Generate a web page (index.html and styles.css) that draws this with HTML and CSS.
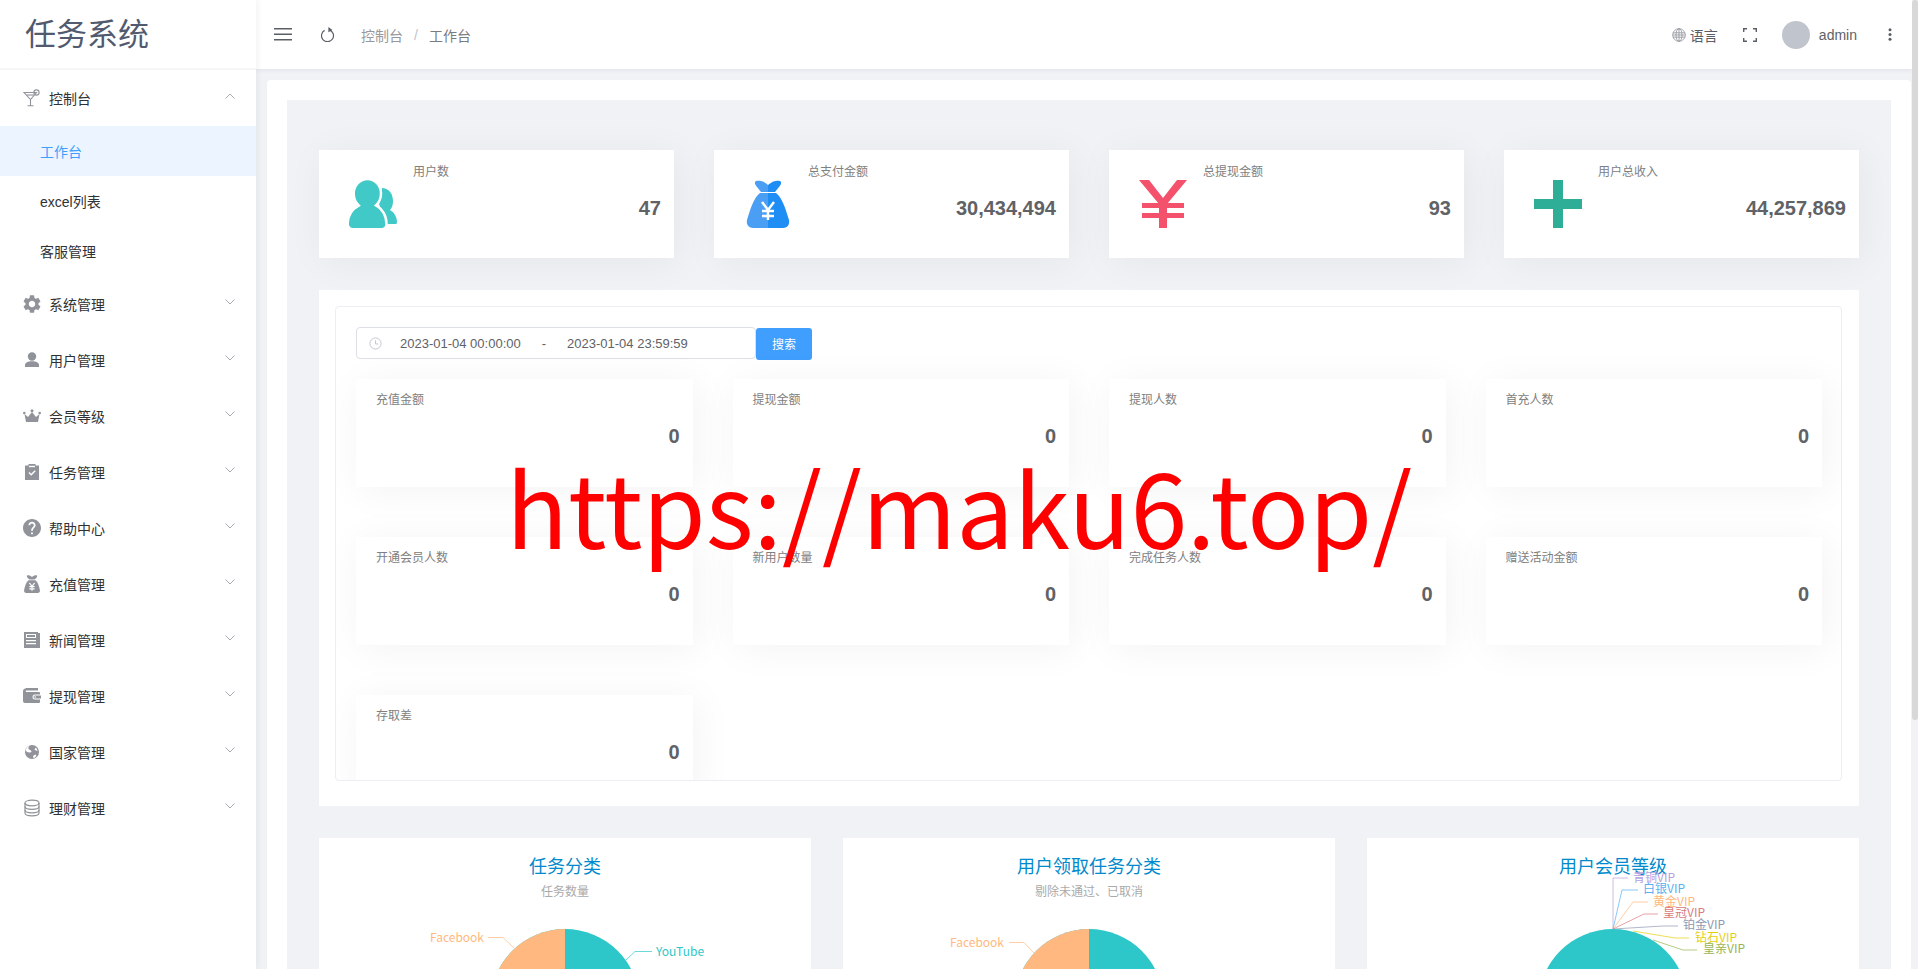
FILE: index.html
```html
<!DOCTYPE html>
<html lang="zh-CN">
<head>
  <meta charset="UTF-8" />
  <meta name="viewport" content="width=device-width, initial-scale=1.0" />
  <title>任务系统</title>
  <link rel="stylesheet" href="styles.css">
</head>
<body>
  <div class="app">
    <aside class="sidebar">
      <div class="logo">任务系统</div>
      <ul class="menu">
        <li class="menu-item">
          <svg class="menu-icon" viewBox="0 0 18 18" fill="none" stroke="currentColor" stroke-width="1.1"><path d="M1 3.5h12.5L7.5 10.5z"/><path d="M7.5 10.5v6M4.5 16.8h6"/><circle cx="13.5" cy="3.5" r="2.6"/><path d="M3.5 6h7.5"/></svg>
          <span>控制台</span>
          <svg class="arrow" viewBox="0 0 10 6"><path d="M.5 5.5 5 1l4.5 4.5"/></svg>
        </li>
        <li class="sub-item active">工作台</li>
        <li class="sub-item">excel列表</li>
        <li class="sub-item">客服管理</li>
        <li class="menu-item">
          <svg class="menu-icon" viewBox="2 2 20 20" fill="currentColor"><path d="M19.14 12.94c.04-.3.06-.61.06-.94 0-.32-.02-.64-.07-.94l2.03-1.58a.49.49 0 0 0 .12-.61l-1.92-3.32a.488.488 0 0 0-.59-.22l-2.39.96c-.5-.38-1.03-.7-1.62-.94l-.36-2.54a.484.484 0 0 0-.48-.41h-3.84c-.24 0-.43.17-.47.41l-.36 2.54c-.59.24-1.13.57-1.62.94l-2.39-.96c-.22-.08-.47 0-.59.22L2.74 8.87c-.12.21-.08.47.12.61l2.03 1.58c-.05.3-.09.63-.09.94s.02.64.07.94l-2.03 1.58a.49.49 0 0 0-.12.61l1.92 3.32c.12.22.37.29.59.22l2.39-.96c.5.38 1.03.7 1.62.94l.36 2.54c.05.24.24.41.48.41h3.84c.24 0 .44-.17.47-.41l.36-2.54c.59-.24 1.13-.56 1.62-.94l2.39.96c.22.08.47 0 .59-.22l1.92-3.32c.12-.22.07-.47-.12-.61l-2.01-1.58zM12 15.6c-1.98 0-3.6-1.62-3.6-3.6s1.62-3.6 3.6-3.6 3.6 1.62 3.6 3.6-1.62 3.6-3.6 3.6z"/></svg>
          <span>系统管理</span>
          <svg class="arrow" viewBox="0 0 10 6"><path d="M.5.5 5 5 9.500.5"/></svg>
        </li>
        <li class="menu-item">
          <svg class="menu-icon" viewBox="0 0 18 18" fill="currentColor"><circle cx="9" cy="5.500" r="4.200"/><path d="M2 16v-2c0-2.500 3-3.800 7-3.800s7 1.300 7 3.800v2z"/></svg>
          <span>用户管理</span>
          <svg class="arrow" viewBox="0 0 10 6"><path d="M.5.5 5 5 9.500.5"/></svg>
        </li>
        <li class="menu-item">
          <svg class="menu-icon" viewBox="0 0 18 18" fill="currentColor"><path d="M1.500 7 5 10l4-5 4 5 3.500-3-1.500 8H3z"/><circle cx="1.300" cy="6" r="1.300"/><circle cx="9" cy="3.800" r="1.500"/><circle cx="16.700" cy="6" r="1.300"/></svg>
          <span>会员等级</span>
          <svg class="arrow" viewBox="0 0 10 6"><path d="M.5.5 5 5 9.500.5"/></svg>
        </li>
        <li class="menu-item">
          <svg class="menu-icon" viewBox="0 0 18 18"><path fill="currentColor" d="M2 2.500h3.500V1h7v1.500H16V17H2z"/><path fill="#fff" d="M6 2.800h6v1.400H6z"/><path fill="none" stroke="#fff" stroke-width="1.400" d="M6 9.500l2.200 2.200 4-4"/></svg>
          <span>任务管理</span>
          <svg class="arrow" viewBox="0 0 10 6"><path d="M.5.5 5 5 9.500.5"/></svg>
        </li>
        <li class="menu-item">
          <svg class="menu-icon" viewBox="2 2 20 20" fill="currentColor"><path d="M12 2C6.480 2 2 6.480 2 12s4.480 10 10 10 10-4.480 10-10S17.520 2 12 2zm1 17h-2v-2h2v2zm2.070-7.750l-.9.920C13.450 12.900 13 13.500 13 15h-2v-.5c0-1.100.45-2.100 1.170-2.830l1.240-1.260c.37-.36.59-.86.59-1.410 0-1.100-.9-2-2-2s-2 .9-2 2H8c0-2.210 1.790-4 4-4s4 1.790 4 4c0 .88-.36 1.680-.93 2.250z"/></svg>
          <span>帮助中心</span>
          <svg class="arrow" viewBox="0 0 10 6"><path d="M.5.5 5 5 9.500.5"/></svg>
        </li>
        <li class="menu-item">
          <svg class="menu-icon" viewBox="0 0 48 48" fill="currentColor"><path d="M11 1c4-1 9 1 13 4 4-3 9-5 13-4 2 2 0 5-2 7l-4 4H17l-4-4c-2-2-4-5-2-7zM15 14h18c7 5 10 16 12 26 1 5-2 8-6 8H9c-4 0-7-3-6-8 2-10 5-21 12-26z"/><path fill="none" stroke="#fff" stroke-width="3" d="M17 21l7 9 7-9M24 30v12M17 31h14M17 37h14"/></svg>
          <span>充值管理</span>
          <svg class="arrow" viewBox="0 0 10 6"><path d="M.5.5 5 5 9.500.5"/></svg>
        </li>
        <li class="menu-item">
          <svg class="menu-icon" viewBox="0 0 18 18"><path fill="currentColor" d="M1 1h14v1h2v15H1z"/><path fill="#fff" d="M3 3h10v4H3zM3 9h10v1.300H3zM3 12h10v1.300H3z"/><path fill="currentColor" d="M4 4h8v2H4z"/></svg>
          <span>新闻管理</span>
          <svg class="arrow" viewBox="0 0 10 6"><path d="M.5.5 5 5 9.500.5"/></svg>
        </li>
        <li class="menu-item">
          <svg class="menu-icon" viewBox="0 0 18 18"><path fill="currentColor" d="M2.500 1H15v2.500H2.500zM0 4.500C0 2.500 1 1.500 2.500 1.500L3 5h13a1 1 0 0 1 1 1v1.500h-5a2.500 2.500 0 0 0 0 5h5V15a1 1 0 0 1-1 1H2a2 2 0 0 1-2-2z"/><path fill="currentColor" d="M12 8.500h6v3h-6a1.500 1.500 0 0 1 0-3z"/><circle cx="12.200" cy="10" r=".8" fill="#fff"/></svg>
          <span>提现管理</span>
          <svg class="arrow" viewBox="0 0 10 6"><path d="M.5.5 5 5 9.500.5"/></svg>
        </li>
        <li class="menu-item">
          <svg class="menu-icon" viewBox="0 0 18 18"><circle cx="9" cy="9" r="7" fill="currentColor"/><path fill="#fff" d="M8 2c-2 1-3 2.500-2.500 4 1 1 2.500 1 3 2.500-.5 1.500-3 1-4.500.5L2.500 7C3.500 4.500 5.500 2.500 8 2zM13 4.500l1.500 3c-1 .5-2.500 0-3-1.200zM10.500 12.500l2-1 1 1.500-2.500 2.300-1-1.300z"/></svg>
          <span>国家管理</span>
          <svg class="arrow" viewBox="0 0 10 6"><path d="M.5.5 5 5 9.500.5"/></svg>
        </li>
        <li class="menu-item">
          <svg class="menu-icon" viewBox="0 0 18 18" fill="none" stroke="currentColor" stroke-width="1.200"><ellipse cx="9" cy="4" rx="7" ry="2.800"/><path d="M2 4v10c0 1.600 3 2.800 7 2.800s7-1.200 7-2.800V4"/><path d="M2 7.500c0 1.600 3 2.800 7 2.800s7-1.200 7-2.800M2 11c0 1.600 3 2.800 7 2.800s7-1.200 7-2.800"/></svg>
          <span>理财管理</span>
          <svg class="arrow" viewBox="0 0 10 6"><path d="M.5.5 5 5 9.500.5"/></svg>
        </li>
      </ul>
    </aside>

    <div class="main">
      <header class="navbar">
        <svg class="hamburger" viewBox="0 0 18 13" fill="currentColor"><path d="M0 0h18v1.600H0zM0 5.500h18v1.600H0zM0 11h18v1.600H0z"/></svg>
        <svg class="refresh" viewBox="0 0 14 15"><path fill="none" stroke="currentColor" stroke-width="1.200" d="M3.600 3.400A6 6 0 1 0 8.200 2.900"/><path fill="currentColor" d="M7.400 0l4 2.900-4 2.400z"/></svg>
        <nav class="breadcrumb">
          <span class="crumb">控制台</span>
          <span class="crumb-sep">/</span>
          <span class="crumb-current">工作台</span>
        </nav>
        <div class="navbar-right">
          <div class="lang">
            <svg class="globe" viewBox="0 0 14 14" fill="none" stroke="currentColor" stroke-width=".8"><circle cx="7" cy="7" r="6.300"/><ellipse cx="7" cy="7" rx="3" ry="6.300"/><path d="M7 .7v12.600M1 4.800h12M1 9.200h12M.7 7h12.600"/></svg>
            <span>语言</span>
          </div>
          <svg class="fullscreen" viewBox="0 0 14 14" fill="none" stroke="currentColor" stroke-width="1.400"><path d="M.7 4V.7H4M10 .7h3.300V4M13.300 10v3.300H10M4 13.300H.7V10"/></svg>
          <div class="avatar"></div>
          <span class="username">admin</span>
          <svg class="more" viewBox="0 0 4 13" fill="currentColor"><circle cx="2" cy="1.700" r="1.500"/><circle cx="2" cy="6.500" r="1.500"/><circle cx="2" cy="11.300" r="1.500"/></svg>
        </div>
      </header>

      <div class="content">
        <div class="dashboard">
          <div class="dashboard-inner">
            <div class="panel-group">
              <div class="panel">
                <svg class="panel-icon" viewBox="0 0 48 48" fill="#40c9c6"><path d="M33 8c6 0 11 5 11 13 0 4-1 7-3 9 4 2 7 7 7 12 0 2-1 2-2 2h-8l-8-20 3-16z"/><path stroke="#fff" stroke-width="2.500" d="M18.500-1C26 -1 32 5.500 32 13.500c0 5-2 9-5 12 6 3 10.500 10 10.500 18.500 0 3-2 5.300-5 5.300H4c-3 0-5.300-2.300-5.300-5.300 0-8.500 4.800-15.500 11-18.500-3-3-5-7-5-12C4.700 5.500 11-1 18.500-1z"/></svg>
                <div class="panel-body">
                  <div class="panel-label">用户数</div>
                  <div class="panel-num">47</div>
                </div>
              </div>
              <div class="panel">
                <svg class="panel-icon" viewBox="0 0 48 48"><path fill="#4a9ff5" d="M24 5C20 1 15 0 12 1c-2 1-1 4 1 6l4 5h7zM24 13h-8C10 17 6 30 3 40c-1 5 2 8 6 8h15z"/><path fill="#1e8ef5" d="M24 5c4-4 9-5 12-4 2 1 1 4-1 6l-4 5h-7zM24 13h8c6 4 10 17 13 27 1 5-2 8-6 8H24z"/><path fill="none" stroke="#fff" stroke-width="2.500" d="M18 22l6 8 6-8M24 30v10M18 31h12M18 36h12"/></svg>
                <div class="panel-body">
                  <div class="panel-label">总支付金额</div>
                  <div class="panel-num">30,434,494</div>
                </div>
              </div>
              <div class="panel">
                <svg class="panel-icon" viewBox="0 0 48 48" fill="#f4516c"><path d="M0 0h10l14 18L38 0h10L28 24h-8z"/><path d="M3 23h42v5H3zM3 33h42v5H3zM20 22h8v26h-8z"/></svg>
                <div class="panel-body">
                  <div class="panel-label">总提现金额</div>
                  <div class="panel-num">93</div>
                </div>
              </div>
              <div class="panel">
                <svg class="panel-icon" viewBox="0 0 48 48" fill="#2fae97"><path d="M19 0h10v19h19v10H29v19H19V29H0V19h19z"/></svg>
                <div class="panel-body">
                  <div class="panel-label">用户总收入</div>
                  <div class="panel-num">44,257,869</div>
                </div>
              </div>
            </div>

            <div class="query-card">
              <div class="query-box">
                <div class="query-bar">
                  <div class="date-picker">
                    <svg class="clock" viewBox="0 0 14 14" fill="none" stroke="currentColor" stroke-width="1"><circle cx="7" cy="7" r="6"/><path d="M7 3.500V7.500h3"/></svg>
                    <span class="date-start">2023-01-04 00:00:00</span>
                    <span class="date-sep">-</span>
                    <span class="date-end">2023-01-04 23:59:59</span>
                  </div>
                  <button class="search-btn">搜索</button>
                </div>
                <div class="stat-grid">
                  <div class="stat"><div class="stat-label">充值金额</div><div class="stat-num">0</div></div>
                  <div class="stat"><div class="stat-label">提现金额</div><div class="stat-num">0</div></div>
                  <div class="stat"><div class="stat-label">提现人数</div><div class="stat-num">0</div></div>
                  <div class="stat"><div class="stat-label">首充人数</div><div class="stat-num">0</div></div>
                  <div class="stat"><div class="stat-label">开通会员人数</div><div class="stat-num">0</div></div>
                  <div class="stat"><div class="stat-label">新用户数量</div><div class="stat-num">0</div></div>
                  <div class="stat"><div class="stat-label">完成任务人数</div><div class="stat-num">0</div></div>
                  <div class="stat"><div class="stat-label">赠送活动金额</div><div class="stat-num">0</div></div>
                  <div class="stat"><div class="stat-label">存取差</div><div class="stat-num">0</div></div>
                </div>
              </div>
            </div>

            <div class="chart-row">
              <div class="chart-card">
                <svg class="chart" viewBox="0 0 492 400">
                  <text class="chart-title" x="246" y="35">任务分类</text>
                  <text class="chart-sub" x="246" y="58">任务数量</text>
                  <circle cx="246" cy="165.500" r="74.500" fill="#2ec7c9"/>
                  <path d="M246 91a74.500 74.500 0 0 0 0 149z" fill="#ffb980"/>
                  <polyline class="leader" stroke="#ffb980" points="169,99.500 184,99.500 195,110"/>
                  <polyline class="leader" stroke="#2ec7c9" points="307,122 316,113.500 333,113.500"/>
                  <text class="pie-label" x="165" y="103.500" text-anchor="end" fill="#ffb980">Facebook</text>
                  <text class="pie-label" x="337" y="117.500" fill="#2ec7c9">YouTube</text>
                </svg>
              </div>
              <div class="chart-card">
                <svg class="chart" viewBox="0 0 492 400">
                  <text class="chart-title" x="246" y="35">用户领取任务分类</text>
                  <text class="chart-sub" x="246" y="58">剔除未通过、已取消</text>
                  <circle cx="246" cy="165.500" r="74.500" fill="#2ec7c9"/>
                  <path d="M246 91a74.500 74.500 0 0 0 0 149z" fill="#ffb980"/>
                  <polyline class="leader" stroke="#ffb980" points="166,104.500 181,104.500 191,115"/>
                  <text class="pie-label" x="161" y="108.500" text-anchor="end" fill="#ffb980">Facebook</text>
                </svg>
              </div>
              <div class="chart-card">
                <svg class="chart" viewBox="0 0 492 400">
                  <text class="chart-title" x="246" y="35">用户会员等级</text>
                  <circle cx="246" cy="165.500" r="74.500" fill="#2ec7c9"/>
                  <polyline class="leader" stroke="#b6a2de" points="261,40 246,40 246,91"/>
                  <polyline class="leader" stroke="#5ab1ef" points="271,52 255,52 246,91"/>
                  <polyline class="leader" stroke="#ffb980" points="281,64 266,64 246,91"/>
                  <polyline class="leader" stroke="#d87a80" points="291,76 277,76 246,91"/>
                  <polyline class="leader" stroke="#8d98b3" points="311,88 296,88 246,91"/>
                  <polyline class="leader" stroke="#e5cf0d" points="322,100 308,100 266,93"/>
                  <polyline class="leader" stroke="#97b552" points="330,112 316,112 286,102"/>
                  <text class="pie-label" x="266" y="43.500" fill="#b6a2de">青铜VIP</text>
                  <text class="pie-label" x="276" y="54.500" fill="#5ab1ef">白银VIP</text>
                  <text class="pie-label" x="286" y="67.500" fill="#ffb980">黄金VIP</text>
                  <text class="pie-label" x="296" y="79" fill="#d87a80">皇冠VIP</text>
                  <text class="pie-label" x="316" y="91" fill="#8d98b3">铂金VIP</text>
                  <text class="pie-label" x="328" y="104" fill="#e5cf0d">钻石VIP</text>
                  <text class="pie-label" x="336" y="115" fill="#97b552">皇亲VIP</text>
                </svg>
              </div>
            </div>
          </div>
        </div>
      </div>
    </div>

    <div class="scrollbar"><div class="scrollbar-thumb"></div></div>

    <div class="watermark">https://maku6.top/</div>
  </div>
</body>
</html>
```

FILE: styles.css
```css
* {
  box-sizing: border-box;
}
body {
  margin: 0;
  font-family: "Liberation Sans", "Noto Sans CJK SC", sans-serif;
  color: #303133;
}
.app {
  position: relative;
  display: flex;
  height: 100vh;
  overflow: hidden;
}

/* sidebar */
.sidebar {
  width: 256px;
  flex-shrink: 0;
  background: #fff;
  box-shadow: 2px 0 6px rgba(0, 21, 41, 0.05);
  z-index: 2;
}
.logo {
  height: 70px;
  padding: 17px 0 0 25px;
  font-size: 31px;
  line-height: 36px;
  color: #515a6e;
  border-bottom: 2px solid #f6f6f6;
}
.menu {
  list-style: none;
  margin: 0;
  padding: 0;
}
.menu-item {
  display: flex;
  align-items: center;
  height: 56px;
  padding: 0 21px 0 23px;
  font-size: 14px;
}
.menu-item span {
  flex: 1;
}
.menu-icon {
  width: 18px;
  height: 18px;
  margin-right: 8px;
  color: #909399;
}
.arrow {
  width: 10px;
  height: 6px;
  margin-top: -4px;
  fill: none;
  stroke: #a8abb2;
  stroke-width: 1;
}
.sub-item {
  height: 50px;
  line-height: 52px;
  padding-left: 40px;
  font-size: 14px;
}
.sub-item.active {
  background: #ecf5ff;
  color: #409eff;
}

/* top bar */
.main {
  flex: 1;
  min-width: 0;
  overflow: hidden;
  background: #f1f2f6;
}
.scrollbar {
  width: 6px;
  flex-shrink: 0;
  background: #f1f2f6;
  z-index: 2;
}
.scrollbar-thumb {
  height: 720px;
  background: #d8d8d8;
  border-radius: 3px;
}
.navbar {
  display: flex;
  align-items: center;
  height: 69px;
  padding: 0 20px 0 18px;
  background: #fff;
  box-shadow: 0 1px 4px rgba(0, 21, 41, 0.08);
  position: relative;
  color: #5a5e66;
}
.hamburger {
  width: 18px;
  height: 13px;
}
.refresh {
  width: 14px;
  height: 15px;
  margin-left: 29px;
}
.breadcrumb {
  display: flex;
  margin-left: 26px;
  font-size: 14px;
}
.crumb {
  color: #97999e;
}
.crumb-sep {
  margin: 0 11px;
  padding-top: 2px;
  color: #c0c4cc;
}
.crumb-current {
  color: #7a7c80;
}
.navbar-right {
  display: flex;
  align-items: center;
  margin-left: auto;
}
.lang {
  display: flex;
  align-items: center;
  font-size: 14px;
}
.globe {
  width: 14px;
  height: 14px;
  margin-right: 4px;
  color: #8d9097;
}
.fullscreen {
  width: 14px;
  height: 14px;
  margin-left: 25px;
}
.avatar {
  width: 28px;
  height: 28px;
  margin-left: 25px;
  border-radius: 50%;
  background: #c0c4cc;
}
.username {
  margin-left: 9px;
  font-size: 14px;
  color: #606266;
}
.more {
  width: 4px;
  height: 13px;
  margin-left: 31px;
}

/* content */
.content {
  padding: 11px 1px 0 11px;
}
.dashboard {
  padding: 20px;
  background: #fff;
  border-radius: 4px;
}
.dashboard-inner {
  display: flex;
  flex-direction: column;
  gap: 32px;
  padding: 50px 32px 40px;
  background: #f0f2f6;
}
.panel-group {
  display: grid;
  grid-template-columns: repeat(4, 355px);
  justify-content: space-between;
}
.panel {
  display: flex;
  height: 108px;
  background: #fff;
  box-shadow: 4px 4px 40px rgba(0, 0, 0, 0.05);
}
.panel-icon {
  flex-shrink: 0;
  width: 48px;
  height: 48px;
  margin: 30px 16px 0 30px;
  overflow: hidden;
}
.panel-body {
  flex: 1;
  padding: 14px 13px 0 0;
}
.panel-label {
  font-size: 12px;
  line-height: 16px;
  color: #808080;
}
.panel-num {
  margin-top: 14px;
  font-size: 20px;
  font-weight: bold;
  line-height: 28px;
  text-align: right;
  color: #606266;
}

.query-card {
  padding: 16px 17px 25px 16px;
  background: #fff;
}
.query-box {
  height: 475px;
  overflow: hidden;
  padding: 20px 19px 0 20px;
  border: 1px solid #ebeef5;
  border-radius: 4px;
}
.query-bar {
  display: flex;
}
.date-picker {
  display: flex;
  align-items: center;
  width: 400px;
  height: 32px;
  padding-left: 12px;
  font-size: 13px;
  color: #606266;
  border: 1px solid #dcdfe6;
  border-radius: 4px;
}
.clock {
  width: 13px;
  height: 13px;
  color: #c0c4cc;
}
.date-start {
  margin-left: 18px;
}
.date-sep {
  margin: 0 21px;
}
.search-btn {
  width: 56px;
  height: 32px;
  margin-top: 1px;
  padding: 0 0 2px;
  font-family: inherit;
  font-size: 12px;
  color: #fff;
  background: #409eff;
  border: 0;
  border-radius: 3px;
}
.stat-grid {
  display: grid;
  grid-template-columns: repeat(4, 1fr);
  gap: 50px 40px;
  margin-top: 19px;
}
.stat {
  height: 108px;
  padding: 13px 13px 0 20px;
  background: #fff;
  box-shadow: 4px 4px 40px rgba(0, 0, 0, 0.05);
}
.stat-label {
  font-size: 12px;
  line-height: 16px;
  color: #808080;
}
.stat-num {
  margin-top: 14px;
  font-size: 20px;
  font-weight: bold;
  line-height: 28px;
  text-align: right;
  color: #606266;
}

.chart-row {
  display: grid;
  grid-template-columns: repeat(3, 492px);
  justify-content: space-between;
}
.chart-card {
  background: #fff;
}
.chart {
  display: block;
  width: 492px;
  height: 400px;
}
.chart-title {
  font-family: "Noto Sans CJK SC", sans-serif;
  font-size: 18px;
  fill: #008acd;
  text-anchor: middle;
}
.chart-sub {
  font-family: "Noto Sans CJK SC", sans-serif;
  font-size: 12px;
  fill: #aaa;
  text-anchor: middle;
}
.pie-label {
  font-family: "Noto Sans CJK SC", sans-serif;
  font-size: 12px;
}
.leader {
  fill: none;
  stroke-width: 1;
  stroke-opacity: 0.7;
}

.watermark {
  position: absolute;
  left: 506px;
  top: 435px;
  font-family: "Noto Sans CJK SC", sans-serif;
  font-size: 102px;
  line-height: 140px;
  color: #f00;
  white-space: nowrap;
  pointer-events: none;
  z-index: 3;
}
```
